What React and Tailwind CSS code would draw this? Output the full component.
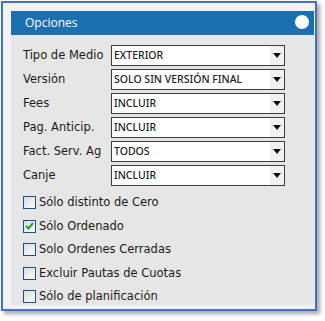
import React from 'react';

const selects = [
  { label: 'Tipo de Medio', value: 'EXTERIOR' },
  { label: 'Versión', value: 'SOLO SIN VERSIÓN FINAL' },
  { label: 'Fees', value: 'INCLUIR' },
  { label: 'Pag. Anticip.', value: 'INCLUIR' },
  { label: 'Fact. Serv. Ag', value: 'TODOS' },
  { label: 'Canje', value: 'INCLUIR' },
];

const checks = [
  { label: 'Sólo distinto de Cero', checked: false },
  { label: 'Sólo Ordenado', checked: true },
  { label: 'Solo Ordenes Cerradas', checked: false },
  { label: 'Excluir Pautas de Cuotas', checked: false },
  { label: 'Sólo de planificación', checked: false },
];

const SelectBox = ({ value }) => (
  <div className="flex h-[21px] w-[174px] items-stretch border border-[#3c3c3c] bg-white">
    <div className="flex flex-1 items-center pl-[2px] text-[10.5px] font-medium text-[#222] font-['Noto_Sans',sans-serif] leading-none">
      {value}
    </div>
    <div className="flex w-[14px] items-center justify-center bg-[#f0f0f0]">
      <svg width="8" height="5" viewBox="0 0 8 5">
        <path d="M0 0 H8 L4 5 Z" fill="#111" />
      </svg>
    </div>
  </div>
);

const CheckBox = ({ checked }) => (
  <div className="flex h-[13px] w-[13px] shrink-0 items-center justify-center border border-[#1f4e8a] bg-gradient-to-br from-[#dcdcdc] to-[#fafafa]">
    {checked && (
      <svg width="9" height="8" viewBox="0 0 9 8">
        <path d="M1 4 L3.5 6.5 L8 1" stroke="#1fa51f" strokeWidth="2" fill="none" />
      </svg>
    )}
  </div>
);

export default function App() {
  return (
    <div className="h-[321px] w-[325px] bg-white pl-[1px] pt-[1px]">
      <div className="h-[310px] w-[316px] border-2 border-[#4470c8] bg-[#f2f2f2] pl-[8px] pr-[1px] pt-[8px] pb-[4px] shadow-[3px_3px_4px_rgba(0,0,0,0.35)]">
        <div className="flex h-full flex-col bg-[#e6e6e6]">
          <div className="flex h-[24px] shrink-0 items-center justify-between bg-[#1c70b0] pl-[14px] pr-[5px]">
            <span className="text-[12px] text-white font-['Open_Sans',sans-serif]">Opciones</span>
            <div className="mb-[2px] h-[14px] w-[14px] rounded-full bg-white" />
          </div>
          <div className="flex shrink-0 flex-col gap-[3px] pl-[12px] pt-[10px] font-['DejaVu_Sans',sans-serif] text-[11.5px] text-[#1a1a1a]">
            {selects.map((s) => (
              <div key={s.label} className="flex h-[21px] items-center">
                <span className="w-[88px]">{s.label}</span>
                <SelectBox value={s.value} />
              </div>
            ))}
          </div>
          <div className="flex shrink-0 flex-col pl-[12px] pt-[5px] font-['DejaVu_Sans',sans-serif] text-[11.5px] text-[#1a1a1a]">
            {checks.map((c) => (
              <div key={c.label} className="flex h-[23.5px] items-center gap-[3px]">
                <CheckBox checked={c.checked} />
                <span>{c.label}</span>
              </div>
            ))}
          </div>
        </div>
      </div>
    </div>
  );
}
